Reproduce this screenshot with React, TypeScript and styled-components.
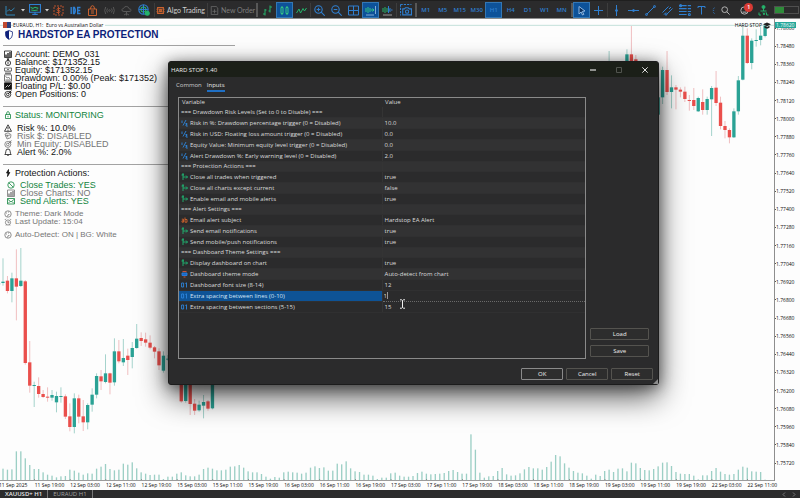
import React, { useState } from 'react';
import styled, { createGlobalStyle, css } from 'styled-components';

const GlobalStyle = createGlobalStyle`
  * { box-sizing: border-box; }
  body { margin: 0; overflow: hidden; background: #2b2b2c; font-family: "Open Sans", "Noto Sans", sans-serif; }
  button, input { font: inherit; color: inherit; margin: 0; padding: 0; border: 0; background: none; outline: none; }
`;

const UI = '"Open Sans", "Noto Sans", sans-serif';
const BLUE = '#2f7fd0';
const GREEN = '#25b36b';
const ORANGE = '#c9622f';

/* ---------- page ---------- */

const Page = styled.div`
  height: 100vh;
  display: flex;
  flex-direction: column;
  overflow: hidden;
  background: #fdfdfd;
`;

/* ---------- toolbar ---------- */

const Toolbar = styled.header`
  flex: none;
  height: 19px;
  display: flex;
  align-items: center;
  padding: 2px 2px 1px;
  background: #2b2b2c;
  border-top: 1px solid #1f1f1f;
  border-bottom: 1px solid #8d8d8d;
  color: #c4c4c4;
`;

const ToolButton = styled.button<{ $on?: boolean; $narrow?: boolean }>`
  flex: none;
  width: ${p => (p.$narrow ? 7 : 17)}px;
  height: 16px;
  display: flex;
  align-items: center;
  justify-content: center;
  color: ${BLUE};
  font-size: 6px;
  font-weight: 600;
  line-height: 8px;
  ${p => p.$on && css`
    background: #0d5299;
    box-shadow: inset 0 0 0 1px #3477b4;
  `}
`;

const LabelButton = styled.button<{ $dim?: boolean }>`
  flex: none;
  height: 16px;
  display: flex;
  align-items: center;
  gap: 2px;
  font-family: Lato, sans-serif;
  font-size: 7px;
  line-height: 8px;
  white-space: nowrap;
  color: ${p => (p.$dim ? '#7d7d7d' : '#cfcfcf')};
`;

const Sep = styled.span<{ $w: number; $thick?: boolean }>`
  flex: none;
  width: ${p => p.$w}px;
  height: 14px;
  display: flex;
  justify-content: center;
  &::before {
    content: '';
    width: ${p => (p.$thick ? 2 : 1)}px;
    background: ${p => (p.$thick ? '#575757' : '#3d3d3d')};
  }
`;

const ToolEnd = styled.div`
  margin-left: auto;
  display: flex;
  align-items: center;
  gap: 2px;
`;

const Badged = styled.span`
  position: relative;
  display: flex;
`;

const Badge = styled.span`
  position: absolute;
  left: 4px;
  top: -3px;
  width: 9px;
  height: 9px;
  border-radius: 50%;
  background: #d83a34;
  color: #fff;
  font-size: 6px;
  line-height: 9px;
  text-align: center;
`;

const Battery = styled.span`
  flex: none;
  width: 25px;
  height: 8px;
  border: 1px solid #4f4f4f;
  display: flex;
  &::before {
    content: '';
    width: 9px;
    background: #2e8b3a;
  }
`;

type G = { s?: number; c?: string; w?: number; children: React.ReactNode };
const Glyph = ({ s = 11, c = BLUE, w = 1, children }: G) => (
  <svg width={s} height={s} viewBox="0 0 11 11" fill="none" stroke={c} strokeWidth={w} aria-hidden="true">
    {children}
  </svg>
);

const Caret = () => (
  <svg width="4" height="3" viewBox="0 0 4 3" aria-hidden="true"><path d="M0 0h4L2 2.5z" fill="#d0d0d0" /></svg>
);

const TIMEFRAMES = ['M1', 'M5', 'M15', 'M30', 'H1', 'H4', 'D1', 'W1', 'MN'];

const TopBar = () => (
  <Toolbar>
    <ToolButton aria-label="New chart"><Glyph c="#2f86b8"><path d="M1 1v9h9M2 6.500l2-2 2 1.500 3.500-3" /></Glyph></ToolButton>
    <ToolButton $narrow aria-label="Chart options"><Caret /></ToolButton>
    <ToolButton aria-label="Profiles">
      <Glyph s={12}><path d="M.5.5h10v7h-10zM3 9.500h5M5.500 8v2" /><path d="M1.500 3l2 1 2-1 3 1M2 5.500l3 .5 3-.5" stroke={GREEN} /></Glyph>
    </ToolButton>
    <ToolButton $narrow aria-label="Profile options"><Caret /></ToolButton>
    <ToolButton aria-label="Symbols">
      <Glyph c="#b9522c"><path d="M1 1h9v9H1z" strokeDasharray="2 1" /><path d="M7.500 3.500h-3q-1 1 0 2h2q1 1 0 2h-3M5.500 2v7" /></Glyph>
    </ToolButton>
    <ToolButton aria-label="MetaEditor IDE">
      <Glyph w={1.4}><path d="M1.200 2v7M3.500 2.500v6h1q1.700-3 0-6zM10.500 2.500H7.700v6h2.800M7.700 5.500h2.500" /></Glyph>
    </ToolButton>
    <ToolButton aria-label="Market"><Glyph c={ORANGE}><path d="M1.500 4h8v6.500h-8zM3.500 4q0-3.300 2-3.300t2 3.300M4 6h3M4 8h3" /></Glyph></ToolButton>
    <ToolButton aria-label="Signals">
      <Glyph c="#585858"><circle cx="5.500" cy="5.500" r=".8" /><path d="M3.500 3.500q-1.500 2 0 4M7.500 3.500q1.500 2 0 4M1.700 2q-2 3.500 0 7M9.300 2q2 3.500 0 7" /></Glyph>
    </ToolButton>
    <ToolButton aria-label="Virtual hosting">
      <Glyph c="#585858"><path d="M3 6.500q-2.500 0-2-2 .3-1 1.500-1 1-2.500 3.300-2 2 .3 2.200 2.200 2.500.2 2 2-.4.800-2 .8zM5.500 6.500v4M3 10l2.500-1.500L8 10" /></Glyph>
    </ToolButton>
    <ToolButton aria-label="Community">
      <Glyph s={12}><circle cx="5" cy="5" r="4.300" /><circle cx="5" cy="5" r="2.300" stroke={GREEN} /><path d="M1 5h8M5 1v8" /><circle cx="8.500" cy="8.500" r="1.800" fill={GREEN} stroke={GREEN} /></Glyph>
    </ToolButton>
    <Sep $w={4} />
    <LabelButton>
      <Glyph s={9} c={ORANGE} w={1.4}><path d="M2 2h7v7H2zM4.500 4.500h2v2h-2z" /><path d="M0 4h11M0 7h11" strokeWidth=".6" /></Glyph>
      Algo Trading
    </LabelButton>
    <Sep $w={5} />
    <LabelButton $dim>
      <Glyph s={9} c="#6a6a6a"><path d="M1.500.5h6l2 2v8h-8zM3 6.500h5M5.500 4v5" /></Glyph>
      New Order
    </LabelButton>
    <Sep $w={4} $thick />
    <ToolButton aria-label="Bar chart"><Glyph c={GREEN}><path d="M3 4v6.500M1 9h2M3 5h1.500M8 .500v7M6.500 6H8M8 2h2" /></Glyph></ToolButton>
    <ToolButton $on aria-label="Candlesticks"><Glyph c="#35c486"><path d="M2 2.500h2v6H2zM7 2.500h2v6H7zM3 1v1.500M3 8.500V10M8 1v1.500M8 8.500V10" /></Glyph></ToolButton>
    <ToolButton aria-label="Line chart"><Glyph c={GREEN}><path d="M.5 8l2.500-4 1.500 4L7 3.500 8.500 6l2-3" /></Glyph></ToolButton>
    <Sep $w={1} />
    <ToolButton aria-label="Zoom in"><Glyph w={1.1}><circle cx="4.500" cy="4.500" r="3.700" /><path d="M7.200 7.200l3.500 3.500M2.700 4.500h3.600M4.500 2.700v3.600" /></Glyph></ToolButton>
    <ToolButton aria-label="Zoom out"><Glyph w={1.1}><circle cx="4.500" cy="4.500" r="3.700" /><path d="M7.200 7.200l3.500 3.500M2.700 4.500h3.600" /></Glyph></ToolButton>
    <ToolButton aria-label="Tile windows"><Glyph><path d="M.5 1h10v9H.5zM5.500 1v9M.5 5.500h10" /></Glyph></ToolButton>
    <ToolButton $on aria-label="Auto scroll"><Glyph c="#35c486"><path d="M1 3v4M3 2v6M5 3v4M6 5h3M7.500 3.500L9 5 7.500 6.500" /><path d="M10.500 1v8M1 10h8" stroke="#9fc3e6" strokeWidth=".8" /></Glyph></ToolButton>
    <ToolButton aria-label="Chart shift"><Glyph c={GREEN}><path d="M1 3v4M3 2v6M5 3v4" /><path d="M6.500 5h4M8.500 3L6.500 5l2 2M6.500 1v7" stroke={BLUE} /><path d="M1 10h9" stroke="#9a9a9a" /></Glyph></ToolButton>
    <Sep $w={1} />
    <ToolButton aria-label="Screenshot"><Glyph s={12}><path d="M.5.5h10" strokeDasharray="2 1" /><path d="M.5.5v10" strokeDasharray="2 1" /><path d="M2.500 4.500H4l1-1h2.500l1 1h2v5.500h-8z" /><circle cx="6.500" cy="7" r="1.500" /></Glyph></ToolButton>
    <Sep $w={3} $thick />
    {TIMEFRAMES.map(t => <ToolButton key={t} $on={t === 'H1'}>{t}</ToolButton>)}
    <Sep $w={3} $thick />
    <ToolButton $on aria-label="Cursor"><Glyph c="#8db9e6"><path d="M3 1.500l6 4.500-2.700.4 1.500 3-1.300.6-1.400-3L3 9z" fill="#0b2f5c" /></Glyph></ToolButton>
    <ToolButton aria-label="Crosshair"><Glyph><path d="M5.500 1v9M1 5.500h9" /></Glyph></ToolButton>
    <Sep $w={1} />
    <ToolButton aria-label="Vertical line"><Glyph><path d="M5.500 0v11" /><circle cx="5.500" cy="5.500" r="1" fill={BLUE} /></Glyph></ToolButton>
    <ToolButton aria-label="Horizontal line"><Glyph><path d="M0 5.500h11" /><circle cx="5.500" cy="5.500" r="1" fill={BLUE} /></Glyph></ToolButton>
    <ToolButton aria-label="Trend line"><Glyph><path d="M1.500 9.500l8-8" /><circle cx="1.500" cy="9.500" r="1" /><circle cx="9.500" cy="1.500" r="1" /></Glyph></ToolButton>
    <ToolButton aria-label="Channel"><Glyph><path d="M.5 7.500l6-6M4.500 9.500l6-6M2 9.500l2-2M7 4l2-2" /><circle cx="4" cy="9.500" r=".8" /></Glyph></ToolButton>
    <ToolButton aria-label="Fibonacci"><Glyph s={12}><path d="M0 1.500h11M0 4.200h11M0 6.900h11M0 9.600h8" strokeDasharray="7 1" /><circle cx="9.500" cy="9.600" r=".9" /><circle cx="1.500" cy="1.500" r=".9" /></Glyph></ToolButton>
    <ToolButton aria-label="Text"><Glyph><path d="M2 3V1.500h7V3M5.500 1.500v8" /></Glyph></ToolButton>
    <ToolButton $narrow aria-label="More objects"><Glyph><path d="M7.500 1l-3 2.500M4.500 5.500h2M4.500 8l3 2.500" /></Glyph></ToolButton>
    <ToolEnd>
      <ToolButton aria-label="Search"><Glyph s={9} c="#b5b5b5" w={1.2}><circle cx="4.500" cy="4.500" r="3.500" /><path d="M7 7l3.500 3.500" /></Glyph></ToolButton>
      <ToolButton aria-label="Notifications">
        <Badged>
          <Glyph s={9} c="#b5b5b5" w={1.2}><circle cx="5.500" cy="5.500" r="4.500" /><path d="M3 7.500h5" /></Glyph>
          <Badge>1</Badge>
        </Badged>
      </ToolButton>
      <ToolButton aria-label="Connection"><Glyph c={GREEN}><circle cx="5.500" cy="2" r="1.500" fill={GREEN} /><path d="M5.500 3v3M2.500 6h6M1 7.500v2.500h2M5 7.500l1 2.500 1-2.500M8.500 7.500v2.500h2" /></Glyph></ToolButton>
      <Battery />
    </ToolEnd>
  </Toolbar>
);

/* ---------- chart ---------- */

// Chart drawing space: three units per pixel, bar spacing in those units.
const STEP = 13.37;
const BASE = 1442;
const barX = (i: number) => 9 + i * STEP;

const VOLUME = [
  36, 33, 34, 88, 88, 67, 47, 35, 35, 25, 18, 15, 10, 13, 14, 33, 30, 24, 18, 22, 21, 36, 42, 50, 35, 31, 33, 51, 48, 55,
  37, 25, 21, 17, 18, 18, 5, 12, 12, 21, 25, 16, 13, 13, 18, 35, 39, 36, 31, 31, 33, 42, 43, 47, 39, 28, 25, 25, 20, 12,
  6, 11, 9, 25, 27, 25, 24, 21, 24, 39, 43, 38, 40, 30, 30, 51, 49, 58, 37, 28, 26, 18, 18, 15, 5, 9, 9, 22, 24, 15,
  12, 12, 14, 23, 27, 21, 19, 20, 21, 23, 29, 32, 26, 21, 21, 139, 93, 24, 9, 13, 14, 29, 38, 19, 15, 16, 22, 34, 41, 37,
  37, 33, 41, 57, 77, 73, 52, 39, 29, 24, 22, 15, 6, 18, 14, 29, 33, 26, 36, 37, 28, 54, 52, 38, 32, 31, 35, 43, 54, 55,
  44, 26, 21, 20, 20, 15, 4, 16, 16, 29, 38, 27, 20, 18, 20, 33, 42, 39, 28, 27, 26, 3,
];

// [bar, high, body top, body bottom, low, rising]
const LEFT: number[][] = [
  [-1, 128, 130, 133, 165, 1], [0, 55, 125, 129, 137, 1], [1, 108, 122, 153, 160, 0], [2, 98, 115, 153, 187, 1],
  [3, 28, 115, 140, 241, 0], [4, 24, 122, 138, 141, 1], [5, 120, 124, 369, 374, 0], [6, 303, 367, 437, 458, 0],
  [7, 425, 435, 437, 501, 1], [8, 412, 438, 462, 473, 0], [9, 450, 462, 471, 474, 0], [10, 442, 470, 472, 485, 0],
  [11, 450, 465, 473, 482, 1], [12, 455, 468, 487, 517, 1], [13, 442, 468, 470, 488, 1], [14, 463, 469, 530, 537, 0],
  [15, 490, 529, 561, 574, 0], [16, 460, 475, 561, 580, 1], [17, 464, 475, 530, 550, 0], [18, 480, 529, 547, 573, 0],
  [19, 490, 495, 547, 568, 1], [20, 445, 464, 494, 515, 1], [21, 400, 408, 464, 475, 1], [22, 390, 409, 424, 450, 0],
  [23, 343, 400, 426, 430, 1], [24, 398, 400, 428, 463, 0], [25, 295, 334, 427, 437, 1], [26, 300, 334, 364, 370, 0],
  [27, 297, 354, 367, 378, 1], [28, 326, 347, 360, 405, 0], [29, 306, 324, 351, 385, 1], [30, 252, 296, 324, 326, 1],
  [31, 277, 294, 303, 318, 0], [32, 278, 298, 308, 320, 0], [33, 286, 308, 323, 328, 0], [34, 318, 322, 335, 355, 0],
  [35, 325, 334, 376, 390, 0], [36, 334, 347, 392, 398, 1], [37, 345, 356, 358, 362, 1], [40, 400, 410, 484, 488, 0],
  [41, 400, 410, 483, 488, 1], [42, 400, 410, 492, 525, 0], [43, 477, 491, 512, 525, 0], [44, 482, 494, 511, 515, 1],
  [45, 465, 486, 497, 535, 1], [46, 480, 484, 506, 512, 0], [47, 400, 410, 505, 508, 1],
].map(([i, h, a, b, l, u]) => [i, h + 720, a + 720, b + 720, l + 720, u]);

const RIGHT: number[][] = [
  [136, 153, 188, 190, 192, 1], [140, 148, 163, 200, 210, 1], [141, 78, 163, 200, 210, 0], [142, 165, 178, 200, 210, 0],
  [147, 280, 292, 344, 348, 1], [148, 200, 210, 292, 312, 1], [149, 153, 210, 276, 285, 0], [150, 226, 262, 276, 325, 1],
  [151, 255, 262, 269, 328, 0], [152, 262, 269, 275, 292, 0], [153, 260, 275, 297, 306, 0], [154, 285, 300, 302, 332, 0],
  [155, 264, 300, 318, 330, 0], [156, 290, 294, 334, 336, 1], [157, 268, 306, 330, 344, 0], [158, 290, 297, 330, 344, 1],
  [159, 258, 264, 298, 408, 1], [160, 213, 263, 309, 318, 0], [161, 290, 308, 378, 388, 0], [162, 363, 378, 390, 415, 0],
  [163, 385, 390, 412, 430, 0], [164, 325, 334, 412, 414, 1], [165, 228, 241, 334, 344, 1], [166, 80, 107, 239, 241, 1],
  [167, 85, 107, 189, 192, 0], [168, 115, 122, 189, 208, 1], [169, 88, 120, 122, 140, 1], [170, 80, 107, 120, 136, 1],
  [171, 70, 77, 108, 112, 1],
];

const ChartArea = styled.main`
  position: relative;
  flex: 1;
  min-height: 0;
  display: grid;
  grid-template-columns: 1fr 26px;
`;

const Plot = styled.section`
  position: relative;
  min-width: 0;
  min-height: 0;
  border-bottom: 1px solid #9b9b9b;
`;

const PlotDrawing = styled.svg`
  position: absolute;
  inset: 0;
  width: 100%;
  height: 100%;
  display: block;
`;

const PriceAxis = styled.aside`
  position: relative;
  display: flex;
  flex-direction: column;
  justify-content: space-between;
  padding: 6px 0 15px;
  border-left: 1px solid #8e8e8e;
  font-size: 5px;
  line-height: 6px;
  color: #0a0a0a;
`;

const PriceLabel = styled.span`
  display: flex;
  align-items: center;
  &::before {
    content: '';
    width: 1px;
    height: 1px;
    background: #555;
  }
`;

const PriceTag = styled.span`
  position: absolute;
  left: 0;
  top: 3px;
  padding: 0 2px 0 1px;
  background: #26a69a;
  color: #f2fffc;
`;

const TimeAxis = styled.footer`
  flex: none;
  height: 9px;
  display: grid;
  grid-template-columns: repeat(22, 4.456%);
  overflow: hidden;
  white-space: nowrap;
  font-size: 5px;
  line-height: 8px;
  color: #0a0a0a;
  background: #fdfdfd;
`;

const TimeLabel = styled.span`
  margin-left: -1px;
`;

const Tabs = styled.nav`
  flex: none;
  height: 8px;
  display: flex;
  background: #2b2b2c;
  font-size: 6px;
  line-height: 8px;
  color: #a9a9a9;
`;

const Tab = styled.button<{ $on?: boolean }>`
  flex: none;
  height: 8px;
  padding: 0 5px;
  border-right: 1px solid #777;
  line-height: 8px;
  color: ${p => (p.$on ? '#e6e6e6' : '#a3a3a3')};
  font-weight: ${p => (p.$on ? 600 : 400)};
`;

const TabArrows = styled.div`
  margin-left: auto;
  display: flex;
  gap: 6px;
  padding: 2px 4px 0;
`;

const Arrow = ({ d }: { d: string }) => (
  <svg width="4" height="5" viewBox="0 0 4 5" fill="none" stroke="#777" aria-hidden="true"><path d={d} /></svg>
);

const PRICES = Array.from({ length: 25 }, (_, i) => (1.786 - i * 0.0012).toFixed(5));
const TIMES = ['11 Sep 2025', '11 Sep 19:00'];
['12', '15', '16', '17', '18', '19'].forEach(d => ['03', '11', '19'].forEach(h => TIMES.push(`${d} Sep ${h}:00`)));
TIMES.push('22 Sep 03:00', '22 Sep 11:00');

const Candles = () => (
  <PlotDrawing viewBox="0 57 2322 1383" preserveAspectRatio="none" aria-label="Price chart">
    <path d="M0 76H2322" stroke="#c3e0da" strokeWidth="3" />
    {VOLUME.map((v, i) => <rect key={i} x={barX(i) - 2} y={BASE - v} width="4" height={v} fill="#9ccfc5" />)}
    {[...LEFT, ...RIGHT].map(([i, h, a, b, l, up]) => (
      <g key={i}>
        <rect x={barX(i) - 1.5} y={h} width="3" height={l - h} fill={up ? '#a5d3cc' : '#f0bfc1'} />
        <rect x={barX(i) - 5} y={a} width="10" height={Math.max(b - a, 3)} fill={up ? '#2aa295' : '#ea4f4c'} />
      </g>
    ))}
    {TIMES.map((t, i) => <rect key={t} x={barX(i * 8 - 1)} y={BASE - 5} width="2" height="5" fill="#777" />)}
  </PlotDrawing>
);

/* ---------- dashboard text on the chart ---------- */

const Dashboard = styled.div`
  position: relative;
  width: 30.3%;
  padding-left: 3px;
  font-family: "Liberation Sans", Arial, sans-serif;
`;

const SymbolLine = styled.div`
  display: flex;
  align-items: center;
  gap: 2px;
  height: 10px;
  padding-top: 2px;
  font: 5px/6px ${UI};
  color: #0a0a0a;
  white-space: nowrap;
`;

const SymbolText = styled.span`
  padding-right: 2px;
  background: #fdfdfd;
`;

const Title = styled.h1`
  display: flex;
  align-items: center;
  gap: 5px;
  margin: 0;
  padding: 0 0 4px 2px;
  font-size: 10px;
  line-height: 12px;
  color: #0d1f7a;
  white-space: nowrap;
`;

const Group = styled.ul<{ $top?: number; $bottom?: number; $indent?: number; $line?: boolean }>`
  list-style: none;
  margin: 0;
  padding: ${p => p.$top ?? 0}px 0 ${p => p.$bottom ?? 0}px ${p => p.$indent ?? 0}px;
  ${p => p.$line && css`border-top: 1px solid #a3a3a3;`}
`;

const Line = styled.li<{ $tone?: 'green' | 'gray'; $gap?: number; $small?: boolean }>`
  display: flex;
  align-items: center;
  gap: ${p => p.$gap ?? 3}px;
  height: 8px;
  padding-left: 1px;
  font-size: ${p => (p.$small ? 8 : 9)}px;
  line-height: 8px;
  white-space: nowrap;
  color: ${p => (p.$tone === 'green' ? '#12843e' : p.$tone === 'gray' ? '#757575' : '#141414')};
`;

type Shape = React.ReactNode;
const P = ({ c = 'currentColor', children }: { c?: string; children: Shape }) => (
  <svg width="8" height="8" viewBox="0 0 8 8" fill="none" stroke={c} strokeWidth=".8" aria-hidden="true">{children}</svg>
);
const barsIcon = <><path d="M.5 1h7v6.500h-7z" /><path d="M2 7V4.500M4 7V3M6 7V2" strokeWidth="1.300" /></>;
const target = <><circle cx="3.800" cy="4.400" r="3" /><circle cx="3.800" cy="4.400" r="1.300" /><path d="M4 4l3.500-3.500M6 .8v1.500h1.500" /></>;
const palette = <><circle cx="4" cy="4" r="3.200" /><path d="M2 3h1M4 2h1M5.500 4.500q-2-.5-2 2" /></>;

const Overview = () => (
  <Dashboard>
    <SymbolLine>
      <svg width="8" height="6" viewBox="0 0 8 6" aria-hidden="true"><path d="M0 0h4v6H0z" fill="#c0492f" /><path d="M4 0h4v6H4z" fill="#2a3f7e" /></svg>
      <SymbolText>EURAUD, H1:&nbsp; Euro vs Australian Dollar</SymbolText>
    </SymbolLine>
    <Title>
      <svg width="8" height="10" viewBox="0 0 8 10" aria-hidden="true">
        <path d="M4 .6l3.400 1.200v3Q7.400 8 4 9.400.6 8 .6 4.800v-3z" fill="#fff" stroke="#0d1f7a" strokeWidth=".8" />
        <path d="M4 .6v8.800Q.6 8 .6 4.800v-3z" fill="#0d1f7a" />
      </svg>
      HARDSTOP EA PROTECTION
    </Title>
    <Group $line $top={4} $bottom={8}>
      <Line><P>{barsIcon}</P>Account: DEMO_031</Line>
      <Line><P><circle cx="4" cy="5" r="2.600" /><path d="M3 .8h2L4 2.300zM4 3.500v3" /></P>Balance: $171352.15</Line>
      <Line><P c="#555"><path d="M.5 2h7v3h-7zM1 6h6M1 7.500h6M3 3.500h2" /></P>Equity: $171352.15</Line>
      <Line><P c="#555"><path d="M.5.8h7v6.500h-7zM1.500 2.500L3.500 4l1-1 2 2.500M1.500 6h5" /></P>Drawdown: 0.00% (Peak: $171352)</Line>
      <Line><P><path d="M.5.8h7v6.500h-7z" fill="#111" /><path d="M1.500 5.500l2-2 1 1 2-2" stroke="#fff" /></P>Floating P/L: $0.00</Line>
      <Line><P>{target}</P>Open Positions: 0</Line>
    </Group>
    <Group $line $top={4} $bottom={5}>
      <Line $tone="green"><P><path d="M1.500 3.500h5v4h-5zM2.500 3.500q0-3 1.500-3t1.500 3M4 4.800v1.500" /></P>Status: MONITORING</Line>
    </Group>
    <Group $bottom={8}>
      <Line $gap={5}><P><path d="M4 .8L7.500 7.300h-7zM4 3v2.300M4 6v.8" /></P>Risk %: 10.0%</Line>
      <Line $gap={5} $tone="gray"><P><path d="M1 2l3-1.200 3 1.800-.5 3.200L3 7zM1 4l5-1M3 2.500l1 3" /></P>Risk $: DISABLED</Line>
      <Line $gap={5} $tone="gray"><P>{target}</P>Min Equity: DISABLED</Line>
      <Line $gap={5}><P><path d="M.8 6.500q1-1 1-3 0-2.500 2.200-2.500t2.200 2.500q0 2 1 3zM3.300 7.500h1.400" /></P>Alert %: 2.0%</Line>
    </Group>
    <Group $line $top={4} $bottom={4}>
      <Line><P><path d="M4.500.5L2.500 4h1.500L3.500 7.500 5.800 3.500H4.500z" fill="#111" /></P>Protection Actions:</Line>
    </Group>
    <Group $bottom={5} $indent={3}>
      <Line $tone="green" $gap={5}><P><circle cx="4" cy="4" r="3.200" /><path d="M1.800 1.800l4.400 4.400" /></P>Close Trades: YES</Line>
      <Line $tone="gray" $gap={5}><P>{barsIcon}</P>Close Charts: NO</Line>
      <Line $tone="green" $gap={5}><P><path d="M.5 1.500h7v5.500h-7zM.5 2l3.500 3 3.500-3M1 6.500l2-2M7 6.500l-2-2" /></P>Send Alerts: YES</Line>
    </Group>
    <Group $bottom={5}>
      <Line $small $tone="gray"><P>{palette}</P>Theme: Dark Mode</Line>
      <Line $small $tone="gray"><P><circle cx="4" cy="4.500" r="2.600" /><path d="M4 3v1.700h1.500M.8 2L2 .8M7.200 2L6 .8M2 7.500l.5-.8M6 7.500l-.5-.8" /></P>Last Update: 15:04</Line>
    </Group>
    <Group>
      <Line $small $tone="gray"><P>{palette}</P>Auto-Detect: ON | BG: White</Line>
    </Group>
  </Dashboard>
);

const ExpertName = styled.div`
  position: absolute;
  right: 3px;
  top: 2px;
  display: flex;
  align-items: center;
  gap: 1px;
  font-size: 5px;
  line-height: 8px;
  color: #0a0a0a;
`;

/* ---------- dialog ---------- */

const Dialog = styled.form`
  position: absolute;
  left: 168px;
  top: 42px;
  width: 61.4%;
  display: flex;
  flex-direction: column;
  border: 1px solid #1c1c1c;
  border-radius: 3px;
  background: #2b2b2c;
  color: #dcdcdc;
  font-size: 6px;
  line-height: 8px;
  box-shadow: 0 12px 30px rgba(0, 0, 0, 0.65), 0 2px 14px rgba(0, 0, 0, 0.45);
`;

const TitleBar = styled.header`
  display: flex;
  align-items: center;
  height: 15px;
  padding: 0 4px 0 2px;
  border-radius: 2px 2px 0 0;
  background: #1b1f18;
  color: #f0f0f0;
`;

const WindowButtons = styled.div`
  margin-left: auto;
  display: flex;
`;

const WindowButton = styled.button`
  width: 26px;
  height: 14px;
  display: flex;
  align-items: center;
  justify-content: center;
  &:last-child { width: 18px; margin-left: 4px; }
`;

const DialogTabs = styled.div`
  display: flex;
  gap: 5px;
  padding: 4px 7px 5px;
`;

const DialogTab = styled.button<{ $on?: boolean }>`
  height: 11px;
  line-height: 8px;
  padding-bottom: 1px;
  border-bottom: 2px solid ${p => (p.$on ? '#1f6fc4' : 'transparent')};
  color: ${p => (p.$on ? '#e8e8e8' : '#cccccc')};
`;

const DialogBody = styled.div`
  display: flex;
  gap: 4px;
  padding: 0 9px;
`;

const Frame = styled.div`
  flex: 1;
  min-height: 262px;
  border: 1px solid #8a8a8a;
`;

const Table = styled.table`
  width: 100%;
  border-collapse: collapse;
  table-layout: fixed;
`;

const HeadCell = styled.th`
  height: 9px;
  padding: 0 3px 1px;
  text-align: left;
  vertical-align: top;
  font-weight: 400;
  &:first-child { width: 50%; }
`;

const Row = styled.tr<{ $alt?: boolean; $section?: boolean }>`
  height: ${p => (p.$section ? 10 : 11)}px;
  background: ${p => (p.$alt ? '#323233' : 'transparent')};
`;

const Cell = styled.td<{ $selected?: boolean; $editing?: boolean }>`
  position: relative;
  padding: 0 2px;
  white-space: nowrap;
  border-left: 1px solid #343434;
  border-bottom: 1px solid #303031;
  &:first-child { border-left: 0; }
  ${p => p.$selected && css`
    background: #0e5396;
    color: #d5e6f7;
  `}
  ${p => p.$editing && css`
    padding: 0 1px;
    border-top: 1px solid #2766a8;
    border-bottom: 1px dotted #6a6a6a;
  `}
`;

const Named = styled.span`
  display: flex;
  align-items: center;
  gap: 2px;
  height: 8px;
`;

const ValueInput = styled.input`
  display: block;
  width: 100%;
  height: 8px;
  line-height: 8px;
`;

const Pointer = styled.svg`
  position: absolute;
  left: 16px;
  top: 8px;
  z-index: 1;
`;

const Caretline = styled.span`
  position: absolute;
  left: 4px;
  top: 1px;
  width: 1px;
  height: 7px;
  background: #9a9a9a;
`;

const SideButtons = styled.div`
  flex: none;
  display: flex;
  flex-direction: column;
  justify-content: flex-end;
  gap: 5px;
  width: 59px;
  padding-bottom: 2px;
`;

const PushButton = styled.button<{ $main?: boolean }>`
  height: 12px;
  min-width: 42px;
  border: 1px solid ${p => (p.$main ? '#8a8a8a' : '#54534f')};
  border-radius: 1px;
  background: #2d2d2d;
  line-height: 8px;
  color: #ededed;
`;

const DialogFooter = styled.footer`
  position: relative;
  display: flex;
  justify-content: flex-end;
  gap: 3px;
  padding: 9px 5px 4px;
`;

const Grip = styled.svg`
  position: absolute;
  right: 0;
  bottom: 0;
`;

const TypeMark = styled.svg`
  flex: none;
  width: 7px;
  height: 8px;
`;

type Kind = 'double' | 'bool' | 'string' | 'enum' | 'int';

const KindIcon = ({ kind }: { kind: Kind }) => {
  const body = {
    double: <path d="M1 1.500v2.500M2 6.500l3-5.500M4.500 4.500h1.500v1H5v1.500h1.800" stroke="#2c86dc" />,
    bool: <path d="M.5 2h2.500M2 1v6M2 4h4.500M5 2.500L6.500 4 5 5.500M1 1h2" stroke="#1fb573" />,
    string: <path d="M.8 3.200h1.700v3H1V4.800h1.500M4 1.500v4.700h2V3.500H4" stroke="#d0632c" />,
    enum: <><path d="M1.500 1.500h4" stroke="#d8553a" /><path d="M1 3h5v2.500H1z" fill="#1767c9" stroke="#2a7fe0" /><path d="M2.500 7h2" stroke="#d8553a" /></>,
    int: <path d="M.6 2h2v4h-2zM4.300 2.500L5.500 1.800v4.700" stroke="#2c86dc" />,
  }[kind];
  return <TypeMark viewBox="0 0 7 8" fill="none" strokeWidth=".9" aria-hidden="true">{body}</TypeMark>;
};

type Item = { section: string } | { kind: Kind; name: string; value: string; editing?: boolean };

const ITEMS: Item[] = [
  { section: '=== Drawdown Risk Levels (Set to 0 to Disable) ===' },
  { kind: 'double', name: 'Risk in %: Drawdown percentage trigger (0 = Disabled)', value: '10.0' },
  { kind: 'double', name: 'Risk in USD: Floating loss amount trigger (0 = Disabled)', value: '0.0' },
  { kind: 'double', name: 'Equity Value: Minimum equity level trigger (0 = Disabled)', value: '0.0' },
  { kind: 'double', name: 'Alert Drawdown %: Early warning level (0 = Disabled)', value: '2.0' },
  { section: '=== Protection Actions ===' },
  { kind: 'bool', name: 'Close all trades when triggered', value: 'true' },
  { kind: 'bool', name: 'Close all charts except current', value: 'false' },
  { kind: 'bool', name: 'Enable email and mobile alerts', value: 'true' },
  { section: '=== Alert Settings ===' },
  { kind: 'string', name: 'Email alert subject', value: 'Hardstop EA Alert' },
  { kind: 'bool', name: 'Send email notifications', value: 'true' },
  { kind: 'bool', name: 'Send mobile/push notifications', value: 'true' },
  { section: '=== Dashboard Theme Settings ===' },
  { kind: 'bool', name: 'Display dashboard on chart', value: 'true' },
  { kind: 'enum', name: 'Dashboard theme mode', value: 'Auto-detect from chart' },
  { kind: 'int', name: 'Dashboard font size (8-14)', value: '12' },
  { kind: 'int', name: 'Extra spacing between lines (0-10)', value: '1', editing: true },
  { kind: 'int', name: 'Extra spacing between sections (5-15)', value: '15' },
];

const InputsTable = () => {
  const [spacing, setSpacing] = useState('1');
  return (
    <Table>
      <thead><tr><HeadCell>Variable</HeadCell><HeadCell>Value</HeadCell></tr></thead>
      <tbody>
        {ITEMS.map((it, i) => 'section' in it ? (
          <Row key={i} $section $alt={i % 2 === 1}><Cell>{it.section}</Cell><Cell /></Row>
        ) : (
          <Row key={i} $alt={i % 2 === 1 && !it.editing}>
            <Cell $selected={it.editing}>
              <Named><KindIcon kind={it.kind} />{it.editing ? <label htmlFor="line-spacing">{it.name}</label> : it.name}</Named>
            </Cell>
            <Cell $editing={it.editing}>
              {it.editing ? (
                <>
                  <ValueInput id="line-spacing" value={spacing} onChange={e => setSpacing(e.target.value)} />
                  <Caretline />
                  <Pointer width="7" height="10" viewBox="0 0 7 10" fill="none" stroke="#f2f2f2" aria-hidden="true">
                    <path d="M1 .8h1.500l1 .7 1-.7H6M3.500 1.500v7M1 9.200h1.500l1-.7 1 .7H6" />
                  </Pointer>
                </>
              ) : it.value}
            </Cell>
          </Row>
        ))}
      </tbody>
    </Table>
  );
};

const SettingsDialog = () => (
  <Dialog role="dialog" aria-label="HARD STOP 1.40" onSubmit={e => e.preventDefault()}>
    <TitleBar>
      HARD STOP 1.40
      <WindowButtons>
        <WindowButton type="button" aria-label="Minimize"><svg width="6" height="6" viewBox="0 0 6 6"><path d="M0 3h6" stroke="#e0e0e0" strokeWidth="1.200" /></svg></WindowButton>
        <WindowButton type="button" aria-label="Maximize"><svg width="6" height="6" viewBox="0 0 6 6"><path d="M.5.5h5v5h-5z" fill="none" stroke="#51544e" /></svg></WindowButton>
        <WindowButton type="button" aria-label="Close"><svg width="6" height="6" viewBox="0 0 6 6"><path d="M.3.3l5.400 5.400M5.700.3L.3 5.700" stroke="#e0e0e0" /></svg></WindowButton>
      </WindowButtons>
    </TitleBar>
    <DialogTabs>
      <DialogTab type="button">Common</DialogTab>
      <DialogTab type="button" $on>Inputs</DialogTab>
    </DialogTabs>
    <DialogBody>
      <Frame><InputsTable /></Frame>
      <SideButtons>
        <PushButton type="button">Load</PushButton>
        <PushButton type="button">Save</PushButton>
      </SideButtons>
    </DialogBody>
    <DialogFooter>
      <PushButton type="submit" $main>OK</PushButton>
      <PushButton type="button">Cancel</PushButton>
      <PushButton type="reset">Reset</PushButton>
      <Grip width="5" height="5" viewBox="0 0 5 5" aria-hidden="true"><path d="M5 0v5H0z" fill="#8c8c8c" /></Grip>
    </DialogFooter>
  </Dialog>
);

export default function App() {
  return (
    <Page>
      <GlobalStyle />
      <TopBar />
      <ChartArea>
        <Plot>
          <Candles />
          <Overview />
          <ExpertName>
            HARD STOP
            <svg width="8" height="7" viewBox="0 0 8 7" aria-hidden="true"><path d="M0 2.300L4 .5l4 1.800L4 4.200zM1.500 3.700L4 5l2.500-1.300v2L4 6.800 1.500 5.700z" fill="#222" /></svg>
          </ExpertName>
        </Plot>
        <PriceAxis>
          {PRICES.map(p => <PriceLabel key={p}>{p}</PriceLabel>)}
          <PriceTag>1.78620</PriceTag>
        </PriceAxis>
        <SettingsDialog />
      </ChartArea>
      <TimeAxis>{TIMES.map(t => <TimeLabel key={t}>{t}</TimeLabel>)}</TimeAxis>
      <Tabs>
        <Tab $on>XAUUSD+ H1</Tab>
        <Tab>EURAUD H1</Tab>
        <TabArrows><Arrow d="M3 .5L1 2.500l2 2" /><Arrow d="M1 .5l2 2-2 2" /></TabArrows>
      </Tabs>
    </Page>
  );
}
